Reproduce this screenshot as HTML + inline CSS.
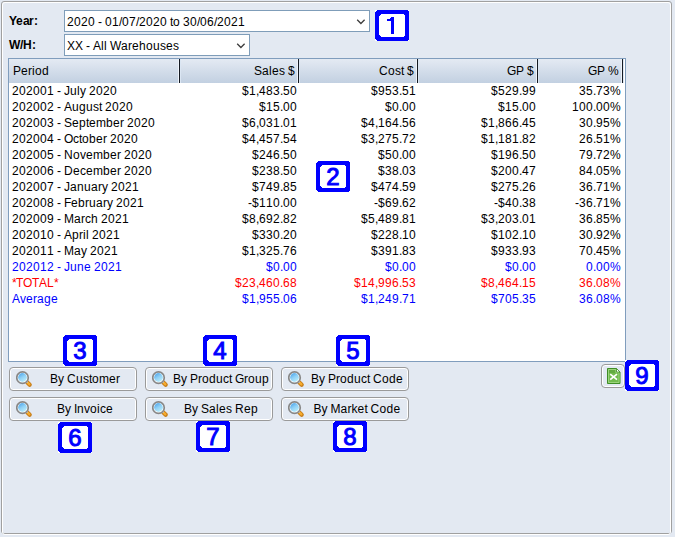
<!DOCTYPE html>
<html><head><meta charset="utf-8"><style>
*{margin:0;padding:0;box-sizing:border-box}
html,body{width:675px;height:537px;overflow:hidden;background:#e3e9f2;font-family:"Liberation Sans",sans-serif;font-size:12px;color:#000}
.panel{position:absolute;left:1px;top:1px;width:671px;height:533px;border:1px solid #a0a0a0;border-radius:3px}
.panel2{position:absolute;left:2px;top:2px;width:669px;height:533px;border:1px solid #fff;border-radius:3px}
.lbl{position:absolute;left:9px;font-weight:bold;line-height:16px}
.combo{position:absolute;background:#fff;border:1px solid #7f9db9}
.combo span{position:absolute;left:2px;top:3px;line-height:16px;white-space:nowrap}
.combo svg{position:absolute}
.grid{position:absolute;left:8px;top:58px;width:618px;height:304px;border:1px solid #809dbd;background:#fff;overflow:hidden}
.hdr{position:absolute;left:0;top:0;width:613px;height:24px;background:linear-gradient(#e4eaf3,#c2d0e1)}
.hdr span{position:absolute;top:4px;line-height:16px;white-space:nowrap}
.sep{position:absolute;top:0;width:1px;height:24px;background:#151a22;box-shadow:-1px 0 0 #eef3fa,1px 0 0 #dbe6f3}
.rows{position:absolute;left:0;top:0;width:675px;height:537px}
.row{position:absolute;left:0;width:675px;height:16px;line-height:16px;white-space:nowrap}
.row span{position:absolute;top:0}
.c0{left:12px}
i{font-style:normal;display:inline-block;text-align:left}
.w1{width:1px}.w2{width:2px}.w3{width:3px}.w4{width:4px}.w5{width:5px}.w6{width:6px}.w7{width:7px}.w8{width:8px}.w9{width:9px}.w10{width:10px}.w11{width:11px}.w12{width:12px}
.bl{color:#0000ff}
.rd{color:#ff0000}
.btn{position:absolute;width:128px;height:24px;border:1px solid #9a9a9a;border-radius:4px;box-shadow:inset 0 0 0 1px #fff}
.btn span{position:absolute;left:24px;right:0;top:3px;text-align:center;line-height:16px;white-space:nowrap}
.mag{position:absolute;left:6px;top:3px}
.badge{position:absolute;width:34px;height:31px}
.badge svg{position:absolute;left:0;top:0}
.badge span{position:absolute;left:0;right:0;top:2px;text-align:center;font-size:24px;line-height:27px;color:#0000ff;-webkit-text-stroke:1px #0000ff}
.xl{position:absolute;left:601px;top:364px;width:24px;height:24px;border:1px solid #9a9a9a;border-radius:4px;box-shadow:inset 0 0 0 1px #fff}
</style></head><body>
<div class="panel"></div>
<div class="panel2"></div>
<div class="lbl" style="top:13px"><i class="w7">Y</i><i class="w7">e</i><i class="w6">a</i><i class="w5">r</i><i class="w4">:</i></div>
<div class="combo" style="left:64px;top:10px;width:306px;height:22px"><span><i class="w7">2</i><i class="w7">0</i><i class="w7">2</i><i class="w7">0</i><i class="w3">&nbsp;</i><i class="w4">-</i><i class="w3">&nbsp;</i><i class="w7">0</i><i class="w7">1</i><i class="w3">/</i><i class="w7">0</i><i class="w7">7</i><i class="w3">/</i><i class="w7">2</i><i class="w7">0</i><i class="w7">2</i><i class="w7">0</i><i class="w3">&nbsp;</i><i class="w3">t</i><i class="w7">o</i><i class="w3">&nbsp;</i><i class="w7">3</i><i class="w7">0</i><i class="w3">/</i><i class="w7">0</i><i class="w7">6</i><i class="w3">/</i><i class="w7">2</i><i class="w7">0</i><i class="w7">2</i><i class="w7">1</i></span><svg style="left:291px;top:8px" width="10" height="6" viewBox="0 0 10 6"><path d="M1.2 0.8 L4.9 4.5 L8.6 0.8" fill="none" stroke="#3c3c3c" stroke-width="1.3"/></svg></div>
<div class="lbl" style="top:37px"><i class="w11">W</i><i class="w3">/</i><i class="w9">H</i><i class="w4">:</i></div>
<div class="combo" style="left:64px;top:34px;width:186px;height:22px"><span><i class="w8">X</i><i class="w8">X</i><i class="w3">&nbsp;</i><i class="w4">-</i><i class="w3">&nbsp;</i><i class="w8">A</i><i class="w3">l</i><i class="w3">l</i><i class="w3">&nbsp;</i><i class="w11">W</i><i class="w7">a</i><i class="w4">r</i><i class="w7">e</i><i class="w7">h</i><i class="w7">o</i><i class="w7">u</i><i class="w6">s</i><i class="w7">e</i><i class="w6">s</i></span><svg style="left:171px;top:8px" width="10" height="6" viewBox="0 0 10 6"><path d="M1.2 0.8 L4.9 4.5 L8.6 0.8" fill="none" stroke="#3c3c3c" stroke-width="1.3"/></svg></div>
<div class="grid">
 <div class="hdr">
  <span style="left:4px"><i class="w8">P</i><i class="w7">e</i><i class="w4">r</i><i class="w3">i</i><i class="w7">o</i><i class="w7">d</i></span>
  <span style="right:327px"><i class="w8">S</i><i class="w7">a</i><i class="w3">l</i><i class="w7">e</i><i class="w6">s</i><i class="w3">&nbsp;</i><i class="w7">$</i></span>
  <span style="right:208px"><i class="w9">C</i><i class="w7">o</i><i class="w6">s</i><i class="w3">t</i><i class="w3">&nbsp;</i><i class="w7">$</i></span>
  <span style="right:88px"><i class="w9">G</i><i class="w8">P</i><i class="w3">&nbsp;</i><i class="w7">$</i></span>
  <span style="right:3px"><i class="w9">G</i><i class="w8">P</i><i class="w3">&nbsp;</i><i class="w11">%</i></span>
  <div class="sep" style="left:170px"></div>
  <div class="sep" style="left:289px"></div>
  <div class="sep" style="left:408px"></div>
  <div class="sep" style="left:528px"></div>
  <div class="sep" style="left:613px"></div>
 </div>
</div>
<div class="rows">
<div class="row" style="top:83px"><span class="c0"><i class="w7">2</i><i class="w7">0</i><i class="w7">2</i><i class="w7">0</i><i class="w7">0</i><i class="w7">1</i><i class="w3">&nbsp;</i><i class="w4">-</i><i class="w3">&nbsp;</i><i class="w6">J</i><i class="w7">u</i><i class="w3">l</i><i class="w6">y</i><i class="w3">&nbsp;</i><i class="w7">2</i><i class="w7">0</i><i class="w7">2</i><i class="w7">0</i></span><span class="cr" style="right:378px"><i class="w7">$</i><i class="w7">1</i><i class="w3">,</i><i class="w7">4</i><i class="w7">8</i><i class="w7">3</i><i class="w3">.</i><i class="w7">5</i><i class="w7">0</i></span><span class="cr" style="right:259px"><i class="w7">$</i><i class="w7">9</i><i class="w7">5</i><i class="w7">3</i><i class="w3">.</i><i class="w7">5</i><i class="w7">1</i></span><span class="cr" style="right:139px"><i class="w7">$</i><i class="w7">5</i><i class="w7">2</i><i class="w7">9</i><i class="w3">.</i><i class="w7">9</i><i class="w7">9</i></span><span class="cr" style="right:54px"><i class="w7">3</i><i class="w7">5</i><i class="w3">.</i><i class="w7">7</i><i class="w7">3</i><i class="w11">%</i></span></div>
<div class="row" style="top:99px"><span class="c0"><i class="w7">2</i><i class="w7">0</i><i class="w7">2</i><i class="w7">0</i><i class="w7">0</i><i class="w7">2</i><i class="w3">&nbsp;</i><i class="w4">-</i><i class="w3">&nbsp;</i><i class="w8">A</i><i class="w7">u</i><i class="w7">g</i><i class="w7">u</i><i class="w6">s</i><i class="w3">t</i><i class="w3">&nbsp;</i><i class="w7">2</i><i class="w7">0</i><i class="w7">2</i><i class="w7">0</i></span><span class="cr" style="right:378px"><i class="w7">$</i><i class="w7">1</i><i class="w7">5</i><i class="w3">.</i><i class="w7">0</i><i class="w7">0</i></span><span class="cr" style="right:259px"><i class="w7">$</i><i class="w7">0</i><i class="w3">.</i><i class="w7">0</i><i class="w7">0</i></span><span class="cr" style="right:139px"><i class="w7">$</i><i class="w7">1</i><i class="w7">5</i><i class="w3">.</i><i class="w7">0</i><i class="w7">0</i></span><span class="cr" style="right:54px"><i class="w7">1</i><i class="w7">0</i><i class="w7">0</i><i class="w3">.</i><i class="w7">0</i><i class="w7">0</i><i class="w11">%</i></span></div>
<div class="row" style="top:115px"><span class="c0"><i class="w7">2</i><i class="w7">0</i><i class="w7">2</i><i class="w7">0</i><i class="w7">0</i><i class="w7">3</i><i class="w3">&nbsp;</i><i class="w4">-</i><i class="w3">&nbsp;</i><i class="w8">S</i><i class="w7">e</i><i class="w7">p</i><i class="w3">t</i><i class="w7">e</i><i class="w10">m</i><i class="w7">b</i><i class="w7">e</i><i class="w4">r</i><i class="w3">&nbsp;</i><i class="w7">2</i><i class="w7">0</i><i class="w7">2</i><i class="w7">0</i></span><span class="cr" style="right:378px"><i class="w7">$</i><i class="w7">6</i><i class="w3">,</i><i class="w7">0</i><i class="w7">3</i><i class="w7">1</i><i class="w3">.</i><i class="w7">0</i><i class="w7">1</i></span><span class="cr" style="right:259px"><i class="w7">$</i><i class="w7">4</i><i class="w3">,</i><i class="w7">1</i><i class="w7">6</i><i class="w7">4</i><i class="w3">.</i><i class="w7">5</i><i class="w7">6</i></span><span class="cr" style="right:139px"><i class="w7">$</i><i class="w7">1</i><i class="w3">,</i><i class="w7">8</i><i class="w7">6</i><i class="w7">6</i><i class="w3">.</i><i class="w7">4</i><i class="w7">5</i></span><span class="cr" style="right:54px"><i class="w7">3</i><i class="w7">0</i><i class="w3">.</i><i class="w7">9</i><i class="w7">5</i><i class="w11">%</i></span></div>
<div class="row" style="top:131px"><span class="c0"><i class="w7">2</i><i class="w7">0</i><i class="w7">2</i><i class="w7">0</i><i class="w7">0</i><i class="w7">4</i><i class="w3">&nbsp;</i><i class="w4">-</i><i class="w3">&nbsp;</i><i class="w9">O</i><i class="w6">c</i><i class="w3">t</i><i class="w7">o</i><i class="w7">b</i><i class="w7">e</i><i class="w4">r</i><i class="w3">&nbsp;</i><i class="w7">2</i><i class="w7">0</i><i class="w7">2</i><i class="w7">0</i></span><span class="cr" style="right:378px"><i class="w7">$</i><i class="w7">4</i><i class="w3">,</i><i class="w7">4</i><i class="w7">5</i><i class="w7">7</i><i class="w3">.</i><i class="w7">5</i><i class="w7">4</i></span><span class="cr" style="right:259px"><i class="w7">$</i><i class="w7">3</i><i class="w3">,</i><i class="w7">2</i><i class="w7">7</i><i class="w7">5</i><i class="w3">.</i><i class="w7">7</i><i class="w7">2</i></span><span class="cr" style="right:139px"><i class="w7">$</i><i class="w7">1</i><i class="w3">,</i><i class="w7">1</i><i class="w7">8</i><i class="w7">1</i><i class="w3">.</i><i class="w7">8</i><i class="w7">2</i></span><span class="cr" style="right:54px"><i class="w7">2</i><i class="w7">6</i><i class="w3">.</i><i class="w7">5</i><i class="w7">1</i><i class="w11">%</i></span></div>
<div class="row" style="top:147px"><span class="c0"><i class="w7">2</i><i class="w7">0</i><i class="w7">2</i><i class="w7">0</i><i class="w7">0</i><i class="w7">5</i><i class="w3">&nbsp;</i><i class="w4">-</i><i class="w3">&nbsp;</i><i class="w9">N</i><i class="w7">o</i><i class="w6">v</i><i class="w7">e</i><i class="w10">m</i><i class="w7">b</i><i class="w7">e</i><i class="w4">r</i><i class="w3">&nbsp;</i><i class="w7">2</i><i class="w7">0</i><i class="w7">2</i><i class="w7">0</i></span><span class="cr" style="right:378px"><i class="w7">$</i><i class="w7">2</i><i class="w7">4</i><i class="w7">6</i><i class="w3">.</i><i class="w7">5</i><i class="w7">0</i></span><span class="cr" style="right:259px"><i class="w7">$</i><i class="w7">5</i><i class="w7">0</i><i class="w3">.</i><i class="w7">0</i><i class="w7">0</i></span><span class="cr" style="right:139px"><i class="w7">$</i><i class="w7">1</i><i class="w7">9</i><i class="w7">6</i><i class="w3">.</i><i class="w7">5</i><i class="w7">0</i></span><span class="cr" style="right:54px"><i class="w7">7</i><i class="w7">9</i><i class="w3">.</i><i class="w7">7</i><i class="w7">2</i><i class="w11">%</i></span></div>
<div class="row" style="top:163px"><span class="c0"><i class="w7">2</i><i class="w7">0</i><i class="w7">2</i><i class="w7">0</i><i class="w7">0</i><i class="w7">6</i><i class="w3">&nbsp;</i><i class="w4">-</i><i class="w3">&nbsp;</i><i class="w9">D</i><i class="w7">e</i><i class="w6">c</i><i class="w7">e</i><i class="w10">m</i><i class="w7">b</i><i class="w7">e</i><i class="w4">r</i><i class="w3">&nbsp;</i><i class="w7">2</i><i class="w7">0</i><i class="w7">2</i><i class="w7">0</i></span><span class="cr" style="right:378px"><i class="w7">$</i><i class="w7">2</i><i class="w7">3</i><i class="w7">8</i><i class="w3">.</i><i class="w7">5</i><i class="w7">0</i></span><span class="cr" style="right:259px"><i class="w7">$</i><i class="w7">3</i><i class="w7">8</i><i class="w3">.</i><i class="w7">0</i><i class="w7">3</i></span><span class="cr" style="right:139px"><i class="w7">$</i><i class="w7">2</i><i class="w7">0</i><i class="w7">0</i><i class="w3">.</i><i class="w7">4</i><i class="w7">7</i></span><span class="cr" style="right:54px"><i class="w7">8</i><i class="w7">4</i><i class="w3">.</i><i class="w7">0</i><i class="w7">5</i><i class="w11">%</i></span></div>
<div class="row" style="top:179px"><span class="c0"><i class="w7">2</i><i class="w7">0</i><i class="w7">2</i><i class="w7">0</i><i class="w7">0</i><i class="w7">7</i><i class="w3">&nbsp;</i><i class="w4">-</i><i class="w3">&nbsp;</i><i class="w6">J</i><i class="w7">a</i><i class="w7">n</i><i class="w7">u</i><i class="w7">a</i><i class="w4">r</i><i class="w6">y</i><i class="w3">&nbsp;</i><i class="w7">2</i><i class="w7">0</i><i class="w7">2</i><i class="w7">1</i></span><span class="cr" style="right:378px"><i class="w7">$</i><i class="w7">7</i><i class="w7">4</i><i class="w7">9</i><i class="w3">.</i><i class="w7">8</i><i class="w7">5</i></span><span class="cr" style="right:259px"><i class="w7">$</i><i class="w7">4</i><i class="w7">7</i><i class="w7">4</i><i class="w3">.</i><i class="w7">5</i><i class="w7">9</i></span><span class="cr" style="right:139px"><i class="w7">$</i><i class="w7">2</i><i class="w7">7</i><i class="w7">5</i><i class="w3">.</i><i class="w7">2</i><i class="w7">6</i></span><span class="cr" style="right:54px"><i class="w7">3</i><i class="w7">6</i><i class="w3">.</i><i class="w7">7</i><i class="w7">1</i><i class="w11">%</i></span></div>
<div class="row" style="top:195px"><span class="c0"><i class="w7">2</i><i class="w7">0</i><i class="w7">2</i><i class="w7">0</i><i class="w7">0</i><i class="w7">8</i><i class="w3">&nbsp;</i><i class="w4">-</i><i class="w3">&nbsp;</i><i class="w7">F</i><i class="w7">e</i><i class="w7">b</i><i class="w4">r</i><i class="w7">u</i><i class="w7">a</i><i class="w4">r</i><i class="w6">y</i><i class="w3">&nbsp;</i><i class="w7">2</i><i class="w7">0</i><i class="w7">2</i><i class="w7">1</i></span><span class="cr" style="right:378px"><i class="w4">-</i><i class="w7">$</i><i class="w7">1</i><i class="w7">1</i><i class="w7">0</i><i class="w3">.</i><i class="w7">0</i><i class="w7">0</i></span><span class="cr" style="right:259px"><i class="w4">-</i><i class="w7">$</i><i class="w7">6</i><i class="w7">9</i><i class="w3">.</i><i class="w7">6</i><i class="w7">2</i></span><span class="cr" style="right:139px"><i class="w4">-</i><i class="w7">$</i><i class="w7">4</i><i class="w7">0</i><i class="w3">.</i><i class="w7">3</i><i class="w7">8</i></span><span class="cr" style="right:54px"><i class="w4">-</i><i class="w7">3</i><i class="w7">6</i><i class="w3">.</i><i class="w7">7</i><i class="w7">1</i><i class="w11">%</i></span></div>
<div class="row" style="top:211px"><span class="c0"><i class="w7">2</i><i class="w7">0</i><i class="w7">2</i><i class="w7">0</i><i class="w7">0</i><i class="w7">9</i><i class="w3">&nbsp;</i><i class="w4">-</i><i class="w3">&nbsp;</i><i class="w10">M</i><i class="w7">a</i><i class="w4">r</i><i class="w6">c</i><i class="w7">h</i><i class="w3">&nbsp;</i><i class="w7">2</i><i class="w7">0</i><i class="w7">2</i><i class="w7">1</i></span><span class="cr" style="right:378px"><i class="w7">$</i><i class="w7">8</i><i class="w3">,</i><i class="w7">6</i><i class="w7">9</i><i class="w7">2</i><i class="w3">.</i><i class="w7">8</i><i class="w7">2</i></span><span class="cr" style="right:259px"><i class="w7">$</i><i class="w7">5</i><i class="w3">,</i><i class="w7">4</i><i class="w7">8</i><i class="w7">9</i><i class="w3">.</i><i class="w7">8</i><i class="w7">1</i></span><span class="cr" style="right:139px"><i class="w7">$</i><i class="w7">3</i><i class="w3">,</i><i class="w7">2</i><i class="w7">0</i><i class="w7">3</i><i class="w3">.</i><i class="w7">0</i><i class="w7">1</i></span><span class="cr" style="right:54px"><i class="w7">3</i><i class="w7">6</i><i class="w3">.</i><i class="w7">8</i><i class="w7">5</i><i class="w11">%</i></span></div>
<div class="row" style="top:227px"><span class="c0"><i class="w7">2</i><i class="w7">0</i><i class="w7">2</i><i class="w7">0</i><i class="w7">1</i><i class="w7">0</i><i class="w3">&nbsp;</i><i class="w4">-</i><i class="w3">&nbsp;</i><i class="w8">A</i><i class="w7">p</i><i class="w4">r</i><i class="w3">i</i><i class="w3">l</i><i class="w3">&nbsp;</i><i class="w7">2</i><i class="w7">0</i><i class="w7">2</i><i class="w7">1</i></span><span class="cr" style="right:378px"><i class="w7">$</i><i class="w7">3</i><i class="w7">3</i><i class="w7">0</i><i class="w3">.</i><i class="w7">2</i><i class="w7">0</i></span><span class="cr" style="right:259px"><i class="w7">$</i><i class="w7">2</i><i class="w7">2</i><i class="w7">8</i><i class="w3">.</i><i class="w7">1</i><i class="w7">0</i></span><span class="cr" style="right:139px"><i class="w7">$</i><i class="w7">1</i><i class="w7">0</i><i class="w7">2</i><i class="w3">.</i><i class="w7">1</i><i class="w7">0</i></span><span class="cr" style="right:54px"><i class="w7">3</i><i class="w7">0</i><i class="w3">.</i><i class="w7">9</i><i class="w7">2</i><i class="w11">%</i></span></div>
<div class="row" style="top:243px"><span class="c0"><i class="w7">2</i><i class="w7">0</i><i class="w7">2</i><i class="w7">0</i><i class="w7">1</i><i class="w7">1</i><i class="w3">&nbsp;</i><i class="w4">-</i><i class="w3">&nbsp;</i><i class="w10">M</i><i class="w7">a</i><i class="w6">y</i><i class="w3">&nbsp;</i><i class="w7">2</i><i class="w7">0</i><i class="w7">2</i><i class="w7">1</i></span><span class="cr" style="right:378px"><i class="w7">$</i><i class="w7">1</i><i class="w3">,</i><i class="w7">3</i><i class="w7">2</i><i class="w7">5</i><i class="w3">.</i><i class="w7">7</i><i class="w7">6</i></span><span class="cr" style="right:259px"><i class="w7">$</i><i class="w7">3</i><i class="w7">9</i><i class="w7">1</i><i class="w3">.</i><i class="w7">8</i><i class="w7">3</i></span><span class="cr" style="right:139px"><i class="w7">$</i><i class="w7">9</i><i class="w7">3</i><i class="w7">3</i><i class="w3">.</i><i class="w7">9</i><i class="w7">3</i></span><span class="cr" style="right:54px"><i class="w7">7</i><i class="w7">0</i><i class="w3">.</i><i class="w7">4</i><i class="w7">5</i><i class="w11">%</i></span></div>
<div class="row bl" style="top:259px"><span class="c0"><i class="w7">2</i><i class="w7">0</i><i class="w7">2</i><i class="w7">0</i><i class="w7">1</i><i class="w7">2</i><i class="w3">&nbsp;</i><i class="w4">-</i><i class="w3">&nbsp;</i><i class="w6">J</i><i class="w7">u</i><i class="w7">n</i><i class="w7">e</i><i class="w3">&nbsp;</i><i class="w7">2</i><i class="w7">0</i><i class="w7">2</i><i class="w7">1</i></span><span class="cr" style="right:378px"><i class="w7">$</i><i class="w7">0</i><i class="w3">.</i><i class="w7">0</i><i class="w7">0</i></span><span class="cr" style="right:259px"><i class="w7">$</i><i class="w7">0</i><i class="w3">.</i><i class="w7">0</i><i class="w7">0</i></span><span class="cr" style="right:139px"><i class="w7">$</i><i class="w7">0</i><i class="w3">.</i><i class="w7">0</i><i class="w7">0</i></span><span class="cr" style="right:54px"><i class="w7">0</i><i class="w3">.</i><i class="w7">0</i><i class="w7">0</i><i class="w11">%</i></span></div>
<div class="row rd" style="top:275px"><span class="c0"><i class="w4">*</i><i class="w7">T</i><i class="w9">O</i><i class="w7">T</i><i class="w8">A</i><i class="w7">L</i><i class="w4">*</i></span><span class="cr" style="right:378px"><i class="w7">$</i><i class="w7">2</i><i class="w7">3</i><i class="w3">,</i><i class="w7">4</i><i class="w7">6</i><i class="w7">0</i><i class="w3">.</i><i class="w7">6</i><i class="w7">8</i></span><span class="cr" style="right:259px"><i class="w7">$</i><i class="w7">1</i><i class="w7">4</i><i class="w3">,</i><i class="w7">9</i><i class="w7">9</i><i class="w7">6</i><i class="w3">.</i><i class="w7">5</i><i class="w7">3</i></span><span class="cr" style="right:139px"><i class="w7">$</i><i class="w7">8</i><i class="w3">,</i><i class="w7">4</i><i class="w7">6</i><i class="w7">4</i><i class="w3">.</i><i class="w7">1</i><i class="w7">5</i></span><span class="cr" style="right:54px"><i class="w7">3</i><i class="w7">6</i><i class="w3">.</i><i class="w7">0</i><i class="w7">8</i><i class="w11">%</i></span></div>
<div class="row bl" style="top:291px"><span class="c0"><i class="w8">A</i><i class="w6">v</i><i class="w7">e</i><i class="w4">r</i><i class="w7">a</i><i class="w7">g</i><i class="w7">e</i></span><span class="cr" style="right:378px"><i class="w7">$</i><i class="w7">1</i><i class="w3">,</i><i class="w7">9</i><i class="w7">5</i><i class="w7">5</i><i class="w3">.</i><i class="w7">0</i><i class="w7">6</i></span><span class="cr" style="right:259px"><i class="w7">$</i><i class="w7">1</i><i class="w3">,</i><i class="w7">2</i><i class="w7">4</i><i class="w7">9</i><i class="w3">.</i><i class="w7">7</i><i class="w7">1</i></span><span class="cr" style="right:139px"><i class="w7">$</i><i class="w7">7</i><i class="w7">0</i><i class="w7">5</i><i class="w3">.</i><i class="w7">3</i><i class="w7">5</i></span><span class="cr" style="right:54px"><i class="w7">3</i><i class="w7">6</i><i class="w3">.</i><i class="w7">0</i><i class="w7">8</i><i class="w11">%</i></span></div>
</div>
<div class="btn" style="left:9px;top:367px"><svg class="mag" width="18" height="18" viewBox="0 0 18 18"><defs><linearGradient id="gl0" x1="0.2" y1="0" x2="0.8" y2="1"><stop offset="0" stop-color="#4ea5ea"/><stop offset="0.45" stop-color="#8ed0f6"/><stop offset="1" stop-color="#bff1fd"/></linearGradient></defs>
<path d="M11.4 11.4 L13.7 13.7" stroke="#c67c18" stroke-width="4.2" stroke-linecap="round"/>
<path d="M11.9 11.9 L13.4 13.4" stroke="#f7ad2e" stroke-width="2.2" stroke-linecap="round"/>
<path d="M10 10 L11.5 11.5" stroke="#c8d0d8" stroke-width="2" />
<circle cx="6.5" cy="6.7" r="5.75" fill="#fff" stroke="#888" stroke-width="1.7"/>
<circle cx="6.5" cy="6.5" r="4.4" fill="url(#gl0)"/></svg><span><i class="w8">B</i><i class="w6">y</i><i class="w3">&nbsp;</i><i class="w9">C</i><i class="w7">u</i><i class="w6">s</i><i class="w3">t</i><i class="w7">o</i><i class="w10">m</i><i class="w7">e</i><i class="w4">r</i></span></div>
<div class="btn" style="left:145px;top:367px"><svg class="mag" width="18" height="18" viewBox="0 0 18 18"><defs><linearGradient id="gl1" x1="0.2" y1="0" x2="0.8" y2="1"><stop offset="0" stop-color="#4ea5ea"/><stop offset="0.45" stop-color="#8ed0f6"/><stop offset="1" stop-color="#bff1fd"/></linearGradient></defs>
<path d="M11.4 11.4 L13.7 13.7" stroke="#c67c18" stroke-width="4.2" stroke-linecap="round"/>
<path d="M11.9 11.9 L13.4 13.4" stroke="#f7ad2e" stroke-width="2.2" stroke-linecap="round"/>
<path d="M10 10 L11.5 11.5" stroke="#c8d0d8" stroke-width="2" />
<circle cx="6.5" cy="6.7" r="5.75" fill="#fff" stroke="#888" stroke-width="1.7"/>
<circle cx="6.5" cy="6.5" r="4.4" fill="url(#gl1)"/></svg><span><i class="w8">B</i><i class="w6">y</i><i class="w3">&nbsp;</i><i class="w8">P</i><i class="w4">r</i><i class="w7">o</i><i class="w7">d</i><i class="w7">u</i><i class="w6">c</i><i class="w3">t</i><i class="w3">&nbsp;</i><i class="w9">G</i><i class="w4">r</i><i class="w7">o</i><i class="w7">u</i><i class="w7">p</i></span></div>
<div class="btn" style="left:281px;top:367px"><svg class="mag" width="18" height="18" viewBox="0 0 18 18"><defs><linearGradient id="gl2" x1="0.2" y1="0" x2="0.8" y2="1"><stop offset="0" stop-color="#4ea5ea"/><stop offset="0.45" stop-color="#8ed0f6"/><stop offset="1" stop-color="#bff1fd"/></linearGradient></defs>
<path d="M11.4 11.4 L13.7 13.7" stroke="#c67c18" stroke-width="4.2" stroke-linecap="round"/>
<path d="M11.9 11.9 L13.4 13.4" stroke="#f7ad2e" stroke-width="2.2" stroke-linecap="round"/>
<path d="M10 10 L11.5 11.5" stroke="#c8d0d8" stroke-width="2" />
<circle cx="6.5" cy="6.7" r="5.75" fill="#fff" stroke="#888" stroke-width="1.7"/>
<circle cx="6.5" cy="6.5" r="4.4" fill="url(#gl2)"/></svg><span><i class="w8">B</i><i class="w6">y</i><i class="w3">&nbsp;</i><i class="w8">P</i><i class="w4">r</i><i class="w7">o</i><i class="w7">d</i><i class="w7">u</i><i class="w6">c</i><i class="w3">t</i><i class="w3">&nbsp;</i><i class="w9">C</i><i class="w7">o</i><i class="w7">d</i><i class="w7">e</i></span></div>
<div class="btn" style="left:9px;top:397px"><svg class="mag" width="18" height="18" viewBox="0 0 18 18"><defs><linearGradient id="gl3" x1="0.2" y1="0" x2="0.8" y2="1"><stop offset="0" stop-color="#4ea5ea"/><stop offset="0.45" stop-color="#8ed0f6"/><stop offset="1" stop-color="#bff1fd"/></linearGradient></defs>
<path d="M11.4 11.4 L13.7 13.7" stroke="#c67c18" stroke-width="4.2" stroke-linecap="round"/>
<path d="M11.9 11.9 L13.4 13.4" stroke="#f7ad2e" stroke-width="2.2" stroke-linecap="round"/>
<path d="M10 10 L11.5 11.5" stroke="#c8d0d8" stroke-width="2" />
<circle cx="6.5" cy="6.7" r="5.75" fill="#fff" stroke="#888" stroke-width="1.7"/>
<circle cx="6.5" cy="6.5" r="4.4" fill="url(#gl3)"/></svg><span><i class="w8">B</i><i class="w6">y</i><i class="w3">&nbsp;</i><i class="w3">I</i><i class="w7">n</i><i class="w6">v</i><i class="w7">o</i><i class="w3">i</i><i class="w6">c</i><i class="w7">e</i></span></div>
<div class="btn" style="left:145px;top:397px"><svg class="mag" width="18" height="18" viewBox="0 0 18 18"><defs><linearGradient id="gl4" x1="0.2" y1="0" x2="0.8" y2="1"><stop offset="0" stop-color="#4ea5ea"/><stop offset="0.45" stop-color="#8ed0f6"/><stop offset="1" stop-color="#bff1fd"/></linearGradient></defs>
<path d="M11.4 11.4 L13.7 13.7" stroke="#c67c18" stroke-width="4.2" stroke-linecap="round"/>
<path d="M11.9 11.9 L13.4 13.4" stroke="#f7ad2e" stroke-width="2.2" stroke-linecap="round"/>
<path d="M10 10 L11.5 11.5" stroke="#c8d0d8" stroke-width="2" />
<circle cx="6.5" cy="6.7" r="5.75" fill="#fff" stroke="#888" stroke-width="1.7"/>
<circle cx="6.5" cy="6.5" r="4.4" fill="url(#gl4)"/></svg><span><i class="w8">B</i><i class="w6">y</i><i class="w3">&nbsp;</i><i class="w8">S</i><i class="w7">a</i><i class="w3">l</i><i class="w7">e</i><i class="w6">s</i><i class="w3">&nbsp;</i><i class="w9">R</i><i class="w7">e</i><i class="w7">p</i></span></div>
<div class="btn" style="left:281px;top:397px"><svg class="mag" width="18" height="18" viewBox="0 0 18 18"><defs><linearGradient id="gl5" x1="0.2" y1="0" x2="0.8" y2="1"><stop offset="0" stop-color="#4ea5ea"/><stop offset="0.45" stop-color="#8ed0f6"/><stop offset="1" stop-color="#bff1fd"/></linearGradient></defs>
<path d="M11.4 11.4 L13.7 13.7" stroke="#c67c18" stroke-width="4.2" stroke-linecap="round"/>
<path d="M11.9 11.9 L13.4 13.4" stroke="#f7ad2e" stroke-width="2.2" stroke-linecap="round"/>
<path d="M10 10 L11.5 11.5" stroke="#c8d0d8" stroke-width="2" />
<circle cx="6.5" cy="6.7" r="5.75" fill="#fff" stroke="#888" stroke-width="1.7"/>
<circle cx="6.5" cy="6.5" r="4.4" fill="url(#gl5)"/></svg><span><i class="w8">B</i><i class="w6">y</i><i class="w3">&nbsp;</i><i class="w10">M</i><i class="w7">a</i><i class="w4">r</i><i class="w6">k</i><i class="w7">e</i><i class="w3">t</i><i class="w3">&nbsp;</i><i class="w9">C</i><i class="w7">o</i><i class="w7">d</i><i class="w7">e</i></span></div>

<div class="xl"><svg style="position:absolute;left:5px;top:3px" width="14" height="16" viewBox="0 0 14 16">
<path d="M0.5 0.5 H9.5 L13 4 V15.5 H0.5 Z" fill="#72bb4e" stroke="#3f8d27"/>
<path d="M1.5 1.5 H9 V4.5 H12 V14.5 H1.5 Z" fill="none" stroke="#9bd47c"/>
<rect x="2" y="2" width="6" height="3" fill="#62aa40"/>
<path d="M9.5 0.5 V4 H13 Z" fill="#fff" stroke="#3f8d27" stroke-width="0.8"/>
<path d="M3.2 6.2 L10 11.6 M10 6.2 L3.2 11.6" stroke="#fff" stroke-width="1.7"/>
</svg></div>
<div class="badge" style="left:375px;top:10px"><svg width="34" height="31" viewBox="0 0 34 31" shape-rendering="crispEdges"><rect width="34" height="31" fill="#fff"/><path fill="#0000ff" fill-rule="evenodd" d="M2 0H32L34 2V29L32 31H2L0 29V2ZM6 4H28L30 6V25L28 27H6L4 25V6Z"/><path fill="#0000ff" d="M16 7H19V24H16V11H12V9H15V8H16Z"/></svg></div>
<div class="badge" style="left:316px;top:161px"><svg width="34" height="31" viewBox="0 0 34 31" shape-rendering="crispEdges"><rect width="34" height="31" fill="#fff"/><path fill="#0000ff" fill-rule="evenodd" d="M2 0H32L34 2V29L32 31H2L0 29V2ZM6 4H28L30 6V25L28 27H6L4 25V6Z"/></svg><span>2</span></div>
<div class="badge" style="left:63px;top:335px"><svg width="34" height="31" viewBox="0 0 34 31" shape-rendering="crispEdges"><rect width="34" height="31" fill="#fff"/><path fill="#0000ff" fill-rule="evenodd" d="M2 0H32L34 2V29L32 31H2L0 29V2ZM6 4H28L30 6V25L28 27H6L4 25V6Z"/></svg><span>3</span></div>
<div class="badge" style="left:203px;top:335px"><svg width="34" height="31" viewBox="0 0 34 31" shape-rendering="crispEdges"><rect width="34" height="31" fill="#fff"/><path fill="#0000ff" fill-rule="evenodd" d="M2 0H32L34 2V29L32 31H2L0 29V2ZM6 4H28L30 6V25L28 27H6L4 25V6Z"/></svg><span>4</span></div>
<div class="badge" style="left:336px;top:335px"><svg width="34" height="31" viewBox="0 0 34 31" shape-rendering="crispEdges"><rect width="34" height="31" fill="#fff"/><path fill="#0000ff" fill-rule="evenodd" d="M2 0H32L34 2V29L32 31H2L0 29V2ZM6 4H28L30 6V25L28 27H6L4 25V6Z"/></svg><span>5</span></div>
<div class="badge" style="left:58px;top:422px"><svg width="34" height="31" viewBox="0 0 34 31" shape-rendering="crispEdges"><rect width="34" height="31" fill="#fff"/><path fill="#0000ff" fill-rule="evenodd" d="M2 0H32L34 2V29L32 31H2L0 29V2ZM6 4H28L30 6V25L28 27H6L4 25V6Z"/></svg><span>6</span></div>
<div class="badge" style="left:196px;top:421px"><svg width="34" height="31" viewBox="0 0 34 31" shape-rendering="crispEdges"><rect width="34" height="31" fill="#fff"/><path fill="#0000ff" fill-rule="evenodd" d="M2 0H32L34 2V29L32 31H2L0 29V2ZM6 4H28L30 6V25L28 27H6L4 25V6Z"/></svg><span>7</span></div>
<div class="badge" style="left:333px;top:421px"><svg width="34" height="31" viewBox="0 0 34 31" shape-rendering="crispEdges"><rect width="34" height="31" fill="#fff"/><path fill="#0000ff" fill-rule="evenodd" d="M2 0H32L34 2V29L32 31H2L0 29V2ZM6 4H28L30 6V25L28 27H6L4 25V6Z"/></svg><span>8</span></div>
<div class="badge" style="left:625px;top:360px"><svg width="34" height="31" viewBox="0 0 34 31" shape-rendering="crispEdges"><rect width="34" height="31" fill="#fff"/><path fill="#0000ff" fill-rule="evenodd" d="M2 0H32L34 2V29L32 31H2L0 29V2ZM6 4H28L30 6V25L28 27H6L4 25V6Z"/></svg><span>9</span></div>
</body></html>
